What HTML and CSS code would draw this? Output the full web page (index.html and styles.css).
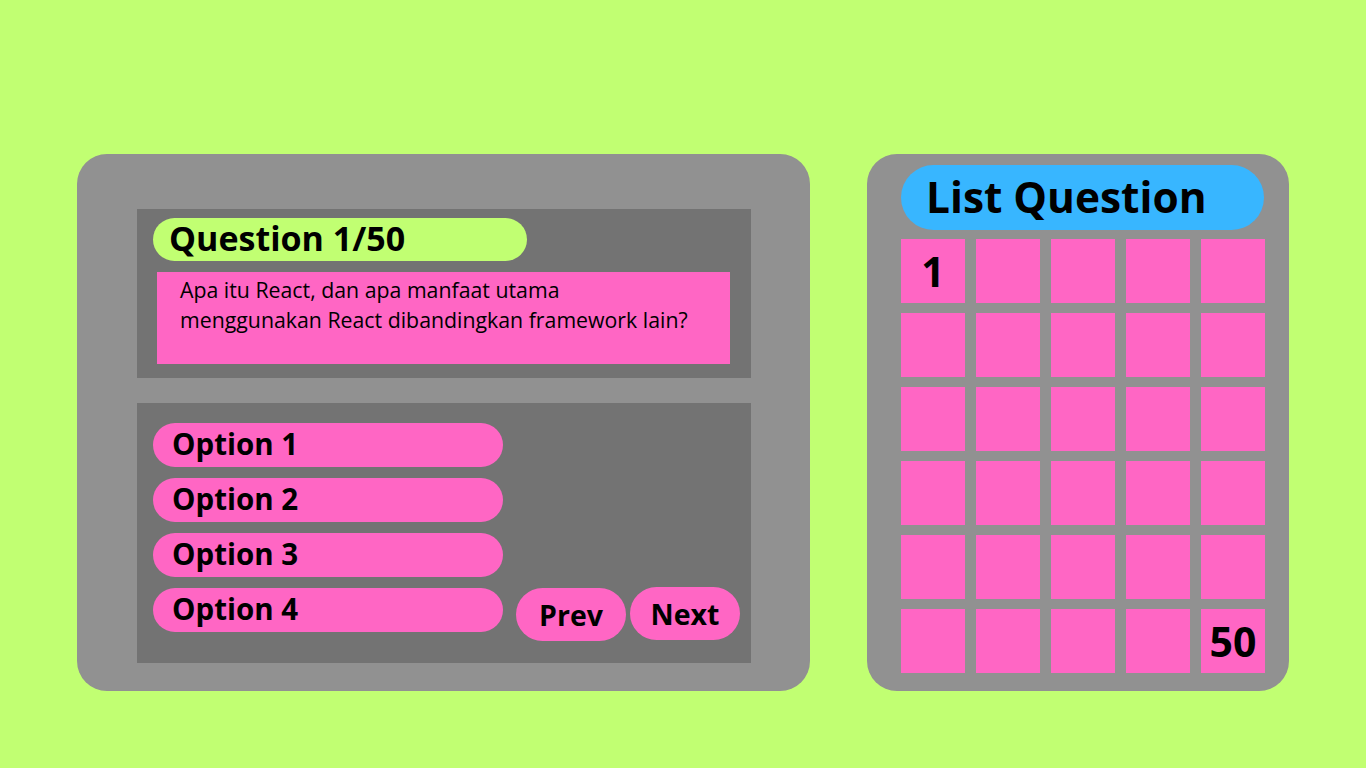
FILE: index.html
```html
<!DOCTYPE html>
<html lang="en">
<head>
  <meta charset="UTF-8" />
  <meta name="viewport" content="width=device-width, initial-scale=1.0"/>
  <title>Quiz</title>
  <link rel="stylesheet" href="styles.css">
</head>
<body>
  <div class="quiz-layout">
    <section class="quiz-panel">
      <div class="question-box">
        <h1 class="question-number">Question 1/50</h1>
        <p class="question-text">Apa itu React, dan apa manfaat utama<br>menggunakan React dibandingkan framework lain?</p>
      </div>

      <div class="answer-box">
        <ul class="option-list">
          <li class="option">Option 1</li>
          <li class="option">Option 2</li>
          <li class="option">Option 3</li>
          <li class="option">Option 4</li>
        </ul>
        <div class="nav-buttons">
          <button class="nav-btn prev">Prev</button>
          <button class="nav-btn next">Next</button>
        </div>
      </div>
    </section>

    <section class="list-panel">
      <h2 class="list-title">List Question</h2>
      <div class="question-grid" id="questionGrid"></div>
    </section>
  </div>

  <script>
    // build the 30 cells of the question list
    const grid = document.getElementById('questionGrid');
    for (let i = 1; i <= 30; i++) {
      const cell = document.createElement('div');
      cell.className = 'grid-cell';
      if (i === 1) cell.textContent = '1';
      if (i === 30) cell.textContent = '50';
      grid.appendChild(cell);
    }
  </script>
</body>
</html>
```

FILE: styles.css
```css
body {
  margin: 0;
  background-color: #c1ff72;
  font-family: "Open Sans", "Liberation Sans", sans-serif;
  color: #000;
}

.quiz-layout {
  display: flex;
  justify-content: center;
  gap: 57px;
  padding-top: 154px;
}

/* left panel */
.quiz-panel {
  width: 733px;
  height: 537px;
  box-sizing: border-box;
  padding: 55px 59px 0 60px;
  background-color: #919191;
  border-radius: 30px;
}

.question-box {
  height: 169px;
  box-sizing: border-box;
  padding: 9px 21px 0 16px;
  background-color: #737373;
}

.question-number {
  width: 374px;
  height: 43px;
  box-sizing: border-box;
  margin: 0;
  padding-left: 16px;
  background-color: #c1ff72;
  border-radius: 22px;
  font-size: 34px;
  font-weight: 700;
  line-height: 41px;
}

.question-text {
  height: 92px;
  box-sizing: border-box;
  margin: 11px 0 0 4px;
  padding: 3px 23px;
  background-color: #ff66c4;
  font-size: 21.3px;
  line-height: 30px;
}

.answer-box {
  display: flex;
  height: 260px;
  box-sizing: border-box;
  margin-top: 25px;
  padding: 20px 11px 22px 16px;
  background-color: #737373;
}

.option-list {
  display: flex;
  flex-direction: column;
  gap: 11px;
  width: 350px;
  margin: 0;
  padding: 0;
  list-style: none;
}

.option {
  height: 44px;
  box-sizing: border-box;
  padding-left: 19px;
  background-color: #ff66c4;
  border-radius: 22px;
  font-size: 29.5px;
  font-weight: 700;
  line-height: 41px;
}

.nav-buttons {
  display: flex;
  align-items: flex-end;
  gap: 4px;
  margin-left: 13px;
}

.nav-btn {
  width: 110px;
  height: 53px;
  padding: 0;
  border: none;
  border-radius: 27px;
  background-color: #ff66c4;
  font-family: inherit;
  font-size: 28.5px;
  font-weight: 700;
  color: #000;
  cursor: pointer;
}

.nav-btn.next {
  margin-bottom: 1px;
}

/* right panel */
.list-panel {
  width: 422px;
  height: 537px;
  box-sizing: border-box;
  padding: 11px 24px 0 34px;
  background-color: #919191;
  border-radius: 30px;
}

.list-title {
  width: 363px;
  height: 65px;
  box-sizing: border-box;
  margin: 0;
  padding-left: 25px;
  background-color: #38b6ff;
  border-radius: 33px;
  font-size: 42.4px;
  font-weight: 700;
  line-height: 63px;
}

.question-grid {
  display: grid;
  grid-template-columns: repeat(5, 64px);
  grid-auto-rows: 64px;
  column-gap: 11px;
  row-gap: 10px;
  margin-top: 9px;
}

.grid-cell {
  display: flex;
  align-items: center;
  justify-content: center;
  background-color: #ff66c4;
  font-size: 41px;
  font-weight: 700;
}
```
